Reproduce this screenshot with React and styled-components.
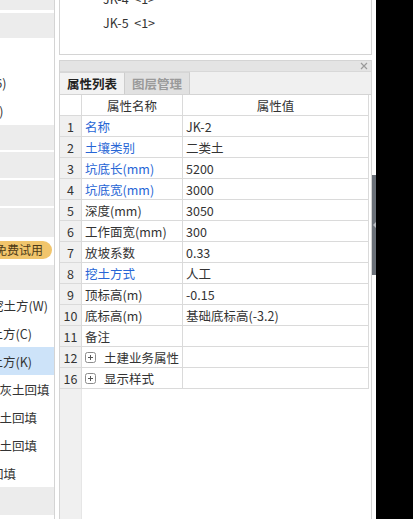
import React from "react";
import styled, { createGlobalStyle } from "styled-components";

const GlobalStyle = createGlobalStyle`
  html, body {
    margin: 0;
    padding: 0;
    background: #fff;
  }
  body {
    font-family: "Microsoft YaHei", "Noto Sans CJK SC", sans-serif;
    font-size: 12.5px;
    color: #333;
  }
`;

const Page = styled.div`
  display: flex;
  width: 413px;
  height: 519px;
  overflow: hidden;
  background: #fff;
`;

// left tree panel (mostly clipped)
const LeftPanel = styled.div`
  width: 54px;
  flex: none;
  display: flex;
  flex-direction: column;
  border-right: 1px solid #d4d4d4;
  overflow: hidden;
`;

const Band = styled.div`
  flex: none;
  height: ${(p) => p.$h}px;
  background: ${(p) => (p.$gray ? "#ececec" : "#fff")};
`;

const LeftRow = styled.div`
  flex: none;
  height: 28px;
  display: flex;
  align-items: center;
  white-space: nowrap;
  color: #333;
  background: ${(p) => (p.$selected ? "#cde3f9" : "#fff")};
  span {
    margin-left: ${(p) => p.$shift}px;
  }
`;

const PillRow = styled.div`
  flex: none;
  height: 25px;
  display: flex;
  align-items: center;
`;

const Pill = styled.div`
  height: 18px;
  margin-left: -16px;
  padding: 0 9px 0 11px;
  border-radius: 9px;
  background: #f1c56c;
  color: #4d3a17;
  font-size: 12px;
  line-height: 18px;
  white-space: nowrap;
`;

const Gutter = styled.div`
  width: 4px;
  flex: none;
`;

const MainColumn = styled.div`
  width: 313px;
  flex: none;
  display: flex;
  flex-direction: column;
`;

const TopPanel = styled.div`
  height: 54px;
  flex: none;
  border: 1px solid #d4d4d4;
  border-top: none;
  overflow: hidden;
`;

const ItemList = styled.div`
  margin-top: -13px;
  padding-left: 43px;
`;

const Item = styled.div`
  height: 24px;
  line-height: 24px;
  color: #333;
  white-space: pre;
`;

const PanelGap = styled.div`
  height: 5px;
  flex: none;
`;

const LowerPanel = styled.div`
  flex: 1;
  display: flex;
  flex-direction: column;
  border: 1px solid #d4d4d4;
  border-bottom: none;
  min-height: 0;
`;

const TitleBar = styled.div`
  height: 10px;
  flex: none;
  background: #e4e4e4;
  border-bottom: 1px solid #d8d8d8;
  display: flex;
  justify-content: flex-end;
  align-items: center;
  padding-right: 3px;
`;

const TabRow = styled.div`
  height: 22px;
  flex: none;
  display: flex;
  background: #f0f0f0;
  border-bottom: 1px solid #d4d4d4;
`;

const Tab = styled.div`
  width: ${(p) => p.$w}px;
  box-sizing: border-box;
  display: flex;
  align-items: center;
  justify-content: center;
  font-weight: 600;
  white-space: nowrap;
  border-right: 1px solid #cdcdcd;
  border-top: 1px solid #d6d6d6;
  background: ${(p) => (p.$active ? "#f2f2f2" : "#e1e1e1")};
  color: ${(p) => (p.$active ? "#222" : "#9a9a9a")};
`;

const Body = styled.div`
  flex: 1;
  display: flex;
  flex-direction: column;
  min-height: 0;
`;

const Table = styled.div`
  display: grid;
  grid-template-columns: 22px 101px 186px;
  flex: none;
`;

const Cell = styled.div`
  box-sizing: border-box;
  height: 21px;
  display: flex;
  align-items: center;
  justify-content: ${(p) => (p.$center ? "center" : "flex-start")};
  padding-left: ${(p) => (p.$center ? 0 : 3)}px;
  border-right: 1px solid #dadada;
  border-bottom: 1px solid #dadada;
  background: ${(p) => (p.$num ? "#f0f0f0" : "#fff")};
  color: ${(p) => (p.$blue ? "#2766d6" : "#333")};
  white-space: nowrap;
  overflow: hidden;
  gap: 8px;
`;

const Filler = styled.div`
  flex: 1;
  display: grid;
  grid-template-columns: 22px 1fr;
`;

const FillerNum = styled.div`
  background: #f0f0f0;
  border-right: 1px solid #e6e6e6;
`;

const Splitter = styled.div`
  width: 4px;
  flex: none;
  display: flex;
  flex-direction: column;
  padding-top: 175px;
`;

const SplitHandle = styled.div`
  height: 100px;
  background: #6b7179;
  display: flex;
  align-items: center;
  justify-content: center;
`;

const BlackArea = styled.div`
  flex: 1;
  background: #000;
`;

const CloseIcon = () => (
  <svg width="8" height="8" viewBox="0 0 8 8">
    <path d="M1 1 L7 7 M7 1 L1 7" stroke="#9a9a9a" strokeWidth="1.2" />
  </svg>
);

const PlusBox = () => (
  <svg width="11" height="11" viewBox="0 0 11 11">
    <rect x="0.5" y="0.5" width="10" height="10" rx="2" fill="#fff" stroke="#8c8c8c" />
    <path d="M3 5.5 H8 M5.5 3 V8" stroke="#555" strokeWidth="1" />
  </svg>
);

const rows = [
  { n: 1, name: "名称", value: "JK-2", blue: true },
  { n: 2, name: "土壤类别", value: "二类土", blue: true },
  { n: 3, name: "坑底长(mm)", value: "5200", blue: true },
  { n: 4, name: "坑底宽(mm)", value: "3000", blue: true },
  { n: 5, name: "深度(mm)", value: "3050" },
  { n: 6, name: "工作面宽(mm)", value: "300" },
  { n: 7, name: "放坡系数", value: "0.33" },
  { n: 8, name: "挖土方式", value: "人工", blue: true },
  { n: 9, name: "顶标高(m)", value: "-0.15" },
  { n: 10, name: "底标高(m)", value: "基础底标高(-3.2)" },
  { n: 11, name: "备注", value: "" },
  { n: 12, name: "土建业务属性", value: "", group: true },
  { n: 16, name: "显示样式", value: "", group: true },
];

const treeRows = [
  { text: "挖土方(W)", shift: -9 },
  { text: "填土方(C)", shift: -22 },
  { text: "填土方(K)", shift: -22, selected: true },
  { text: "石灰土回填", shift: -13 },
  { text: "素土回填", shift: -13 },
  { text: "灰土回填", shift: -13 },
  { text: "回填", shift: -9 },
];

const App = () => {
  return (
    <>
      <GlobalStyle />
      <Page>
        <LeftPanel>
          <Band $h={10} $gray />
          <Band $h={3} />
          <Band $h={25} $gray />
          <Band $h={30} />
          <LeftRow $shift={-9}><span>(6)</span></LeftRow>
          <LeftRow $shift={-12}><span>(1)</span></LeftRow>
          <Band $h={1} />
          <Band $h={25} $gray />
          <Band $h={2} />
          <Band $h={26} $gray />
          <Band $h={2} />
          <Band $h={26} $gray />
          <Band $h={2} />
          <Band $h={29} $gray />
          <PillRow>
            <Pill>免费试用</Pill>
          </PillRow>
          <Band $h={3} />
          <Band $h={25} $gray />
          <Band $h={1} />
          {treeRows.map((r) => (
            <LeftRow key={r.text + r.shift} $shift={r.shift} $selected={r.selected}>
              <span>{r.text}</span>
            </LeftRow>
          ))}
          <Band $h={28} $gray />
        </LeftPanel>

        <Gutter />

        <MainColumn>
          <TopPanel>
            <ItemList>
              <Item>{"JK-4  <1>"}</Item>
              <Item>{"JK-5  <1>"}</Item>
            </ItemList>
          </TopPanel>
          <PanelGap />
          <LowerPanel>
            <TitleBar>
              <CloseIcon />
            </TitleBar>
            <TabRow>
              <Tab $w={65} $active>属性列表</Tab>
              <Tab $w={65}>图层管理</Tab>
            </TabRow>
            <Body>
              <Table>
                <Cell $center />
                <Cell $center>属性名称</Cell>
                <Cell $center>属性值</Cell>
                {rows.map((r) => (
                  <React.Fragment key={r.n}>
                    <Cell $center $num>{r.n}</Cell>
                    <Cell $blue={r.blue}>
                      {r.group && <PlusBox />}
                      {r.name}
                    </Cell>
                    <Cell>{r.value}</Cell>
                  </React.Fragment>
                ))}
              </Table>
              <Filler>
                <FillerNum />
                <div />
              </Filler>
            </Body>
          </LowerPanel>
        </MainColumn>

        <Splitter>
          <SplitHandle>
            <svg width="3" height="6" viewBox="0 0 3 6">
              <path d="M3 0 L0 3 L3 6 Z" fill="#b8bcc2" />
            </svg>
          </SplitHandle>
        </Splitter>

        <BlackArea />
      </Page>
    </>
  );
};

export default App;
